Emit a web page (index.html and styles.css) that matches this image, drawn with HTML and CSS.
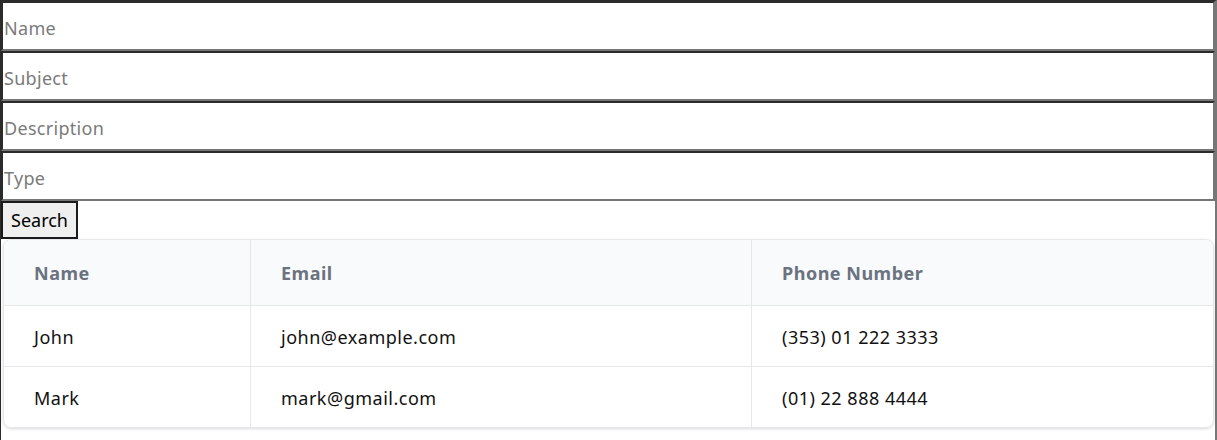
FILE: index.html
```html
<!DOCTYPE html>
<html lang="en">
<head>
<meta charset="utf-8">
<title>Search</title>
<link rel="stylesheet" href="styles.css">
</head>
<body>
<div class="page">
  <form class="search-form">
    <input class="field" type="text" placeholder="Name">
    <input class="field" type="text" placeholder="Subject">
    <input class="field" type="text" placeholder="Description">
    <input class="field" type="text" placeholder="Type">
    <button class="search-btn" type="button">Search</button>
  </form>
  <div class="card">
    <table class="results">
      <thead>
        <tr>
          <th class="col-name">Name</th>
          <th class="col-email">Email</th>
          <th class="col-phone">Phone Number</th>
        </tr>
      </thead>
      <tbody>
        <tr>
          <td>John</td>
          <td>john@example.com</td>
          <td>(353) 01 222 3333</td>
        </tr>
        <tr>
          <td>Mark</td>
          <td>mark@gmail.com</td>
          <td>(01) 22 888 4444</td>
        </tr>
      </tbody>
    </table>
  </div>
</div>
</body>
</html>
```

FILE: styles.css
```css
html, body {
  margin: 0;
  padding: 0;
  background: #ffffff;
}

body {
  font-family: "Noto Sans", "Open Sans", sans-serif;
  color: #111111;
}

.page {
  box-sizing: border-box;
  min-height: 440px;
  border-top: 1px solid #2b2b2b;
  border-left: 1px solid #2b2b2b;
  border-right: 2px solid #777777;
}

.search-form {
  display: flex;
  flex-direction: column;
  align-items: flex-start;
}

.field {
  box-sizing: border-box;
  display: block;
  width: 100%;
  height: 50px;
  margin: 0;
  padding: 3px 0 0 1px;
  font-family: inherit;
  font-size: 18px;
  letter-spacing: 0.3px;
  color: #111111;
  background: #ffffff;
  border-width: 2px;
  border-style: solid;
  border-color: #2b2b2b #767676 #767676 #2b2b2b;
}

.field::placeholder {
  color: #7a7a7a;
}

.search-btn {
  box-sizing: border-box;
  height: 38px;
  margin: 0;
  padding: 0 8px;
  font-family: inherit;
  font-size: 18px;
  color: #000000;
  background: #efefef;
  border: 2px solid #1a1a1a;
  border-radius: 0;
}

.card {
  margin: 0 1px 0 2px;
  border: 1px solid #e5e7eb;
  border-radius: 8px;
  box-shadow: 0 1px 3px rgba(0, 0, 0, 0.15);
  overflow: hidden;
}

.results {
  width: 100%;
  border-collapse: collapse;
  font-size: 18px;
  letter-spacing: 0.5px;
}

.results th,
.results td {
  text-align: left;
  padding: 2px 30px 0;
  border-left: 1px solid #e5e7eb;
}

.results th:first-child,
.results td:first-child {
  border-left: none;
}

.results thead tr {
  background: #f9fafb;
  height: 65px;
}

.results th {
  font-weight: 700;
  color: #6b7280;
}

.results tbody tr {
  height: 61px;
  border-top: 1px solid #e5e7eb;
}

.results td {
  color: #111111;
}

.col-name { width: 186px; }
.col-email { width: 440px; }
```
